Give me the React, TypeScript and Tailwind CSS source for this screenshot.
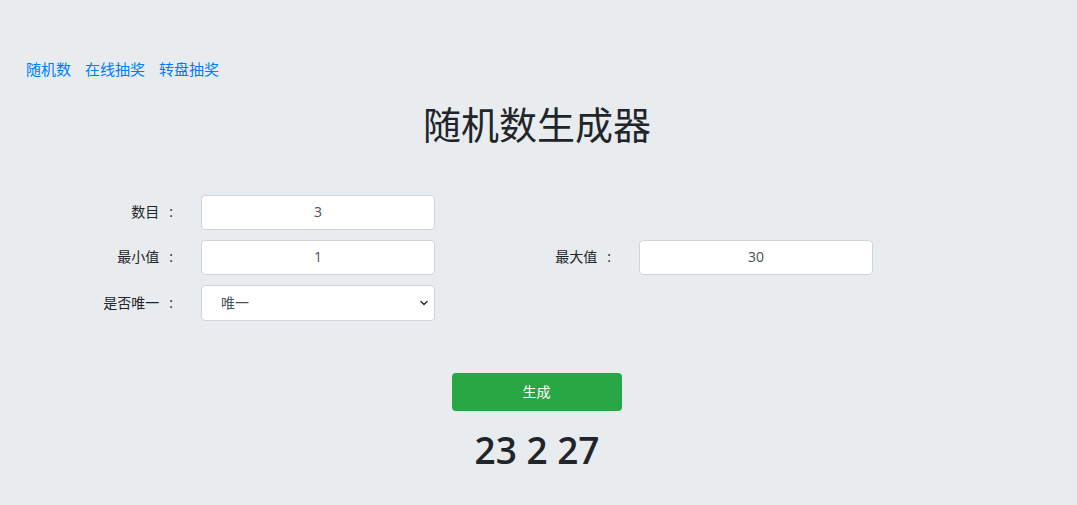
import { ChevronDown } from "lucide-react";

const font = { fontFamily: '"Open Sans", "Noto Sans CJK SC", sans-serif' };

function Label({ text, w }: { text: string; w: string }) {
  return (
    <div className={`${w} flex justify-end items-center text-sm text-[#212529] pr-[28px]`}>
      <span>{text}</span>
      <span className="ml-[10px]">:</span>
    </div>
  );
}

function Field({ label, value, labelW }: { label: string; value: string; labelW: string }) {
  return (
    <div className="flex items-center">
      <Label text={label} w={labelW} />
      <div className="w-[234px] h-[35px] bg-white border border-[#ced4da] rounded flex items-center justify-center text-sm text-[#495057]">
        {value}
      </div>
    </div>
  );
}

export default function App() {
  return (
    <div className="w-[1077px] h-[505px] bg-[#e9ecef] overflow-hidden" style={font}>
      <div className="pt-[58px] pl-[26px] flex gap-[14px] text-[15px] text-[#007bff]">
        <a>随机数</a>
        <a>在线抽奖</a>
        <a>转盘抽奖</a>
      </div>
      <h1 className="mt-[13px] text-center text-[38px] leading-[60px] text-[#212529] pr-[3px]">随机数生成器</h1>
      <div className="mt-[41px] flex flex-col gap-[10px]">
        <Field label="数目" value="3" labelW="w-[201px]" />
        <div className="flex items-center">
          <Field label="最小值" value="1" labelW="w-[201px]" />
          <Field label="最大值" value="30" labelW="w-[204px]" />
        </div>
        <div className="flex items-center">
          <Label text="是否唯一" w="w-[201px]" />
          <div className="w-[234px] h-[36px] bg-white border border-[#ced4da] rounded flex items-center justify-between pl-[19px] pr-[4px] text-sm text-[#495057]">
            <span>唯一</span>
            <ChevronDown size={12} strokeWidth={3} className="text-[#333]" />
          </div>
        </div>
      </div>
      <div className="mt-[52px] flex justify-center pr-[4px]">
        <button className="w-[170px] h-[38px] bg-[#28a745] rounded text-white text-sm">生成</button>
      </div>
      <div className="mt-[12px] text-center text-[37px] leading-[54px] font-semibold text-[#212529] pr-[3px]">23 2 27</div>
    </div>
  );
}
